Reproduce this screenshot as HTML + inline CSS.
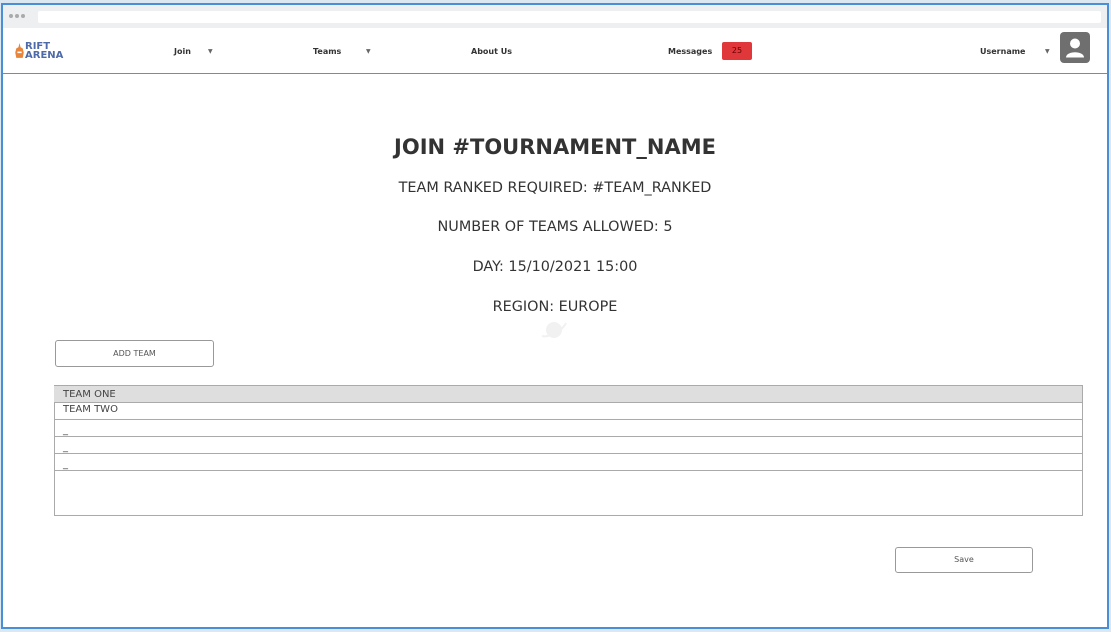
<!DOCTYPE html>
<html><head><meta charset="utf-8"><style>
*{box-sizing:border-box;margin:0;padding:0}
body{width:1111px;height:632px;background:#dbe7f1;position:relative;overflow:hidden;font-family:"DejaVu Sans","Liberation Sans",sans-serif;color:#333}
.frame{position:absolute;left:1px;top:3px;width:1108px;height:626px;border:2px solid #4a8fd6;background:#fff}
.abs{position:absolute}
.addr{left:0;top:0;width:1104px;height:23px;background:#eeeff1}
.url{left:35px;top:6px;width:1063px;height:12px;background:#fff;border-radius:2px}
.dot{width:4px;height:4px;border-radius:50%;background:#aaa;top:9px}
.nav{font-size:8px;font-weight:bold;color:#333}
.caret{font-size:6px;color:#666}
.c{text-align:center;width:1104px;left:0}
.btn{border:1px solid #999;border-radius:3px;font-size:8px;color:#555;text-align:center;background:#fff}
.row{left:51px;width:1028px;border-bottom:1px solid #aaa;font-size:10px;padding-left:9px;color:#444}
</style></head><body>
<div class="frame">
 <div class="abs addr"></div>
 <div class="abs dot" style="left:6px"></div><div class="abs dot" style="left:12px"></div><div class="abs dot" style="left:18px"></div>
 <div class="abs url"></div>
 <div class="abs" style="left:0;top:68px;width:1104px;height:1px;background:#888"></div>
 <svg class="abs" style="left:11px;top:38px" width="11" height="16" viewBox="0 0 10 15"><path d="M5 0 L6 4 L8 5 L9 9 L8 14 L2 14 L1 9 L2 5 L4 4Z" fill="#e8853a"/><rect x="3" y="8" width="4" height="1.5" fill="#fff"/></svg>
 <div class="abs" style="left:22px;top:37px;font-size:10px;font-weight:bold;color:#4f6aa8;line-height:9px">RIFT<br>ARENA</div>
 <div class="abs nav" style="left:171px;top:42px">Join</div><div class="abs caret" style="left:205px;top:43px">▼</div>
 <div class="abs nav" style="left:310px;top:42px">Teams</div><div class="abs caret" style="left:363px;top:43px">▼</div>
 <div class="abs nav" style="left:468px;top:42px">About Us</div>
 <div class="abs nav" style="left:665px;top:42px">Messages</div>
 <div class="abs" style="left:719px;top:37px;width:30px;height:18px;background:#e0373b;border-radius:2px;font-size:8px;color:#600;text-align:center;line-height:18px">25</div>
 <div class="abs nav" style="left:977px;top:42px">Username</div><div class="abs caret" style="left:1042px;top:43px">▼</div>
 <div class="abs" style="left:1057px;top:27px;width:30px;height:31px;background:#6f6f6f;border-radius:4px"><svg width="30" height="31" viewBox="0 0 30 30"><circle cx="15" cy="11" r="5" fill="#fff"/><path d="M6 25 C6 18 24 18 24 25Z" fill="#fff"/></svg></div>
 <div class="abs c" style="top:130px;font-size:21px;font-weight:bold;color:#333">JOIN #TOURNAMENT_NAME</div>
 <div class="abs c" style="top:175px;font-size:14.4px">TEAM RANKED REQUIRED: #TEAM_RANKED</div>
 <div class="abs c" style="top:214px;font-size:14.4px">NUMBER OF TEAMS ALLOWED: 5</div>
 <div class="abs c" style="top:254px;font-size:14.4px">DAY: 15/10/2021 15:00</div>
 <div class="abs c" style="top:294px;font-size:14.4px">REGION: EUROPE</div>
 <svg class="abs" style="left:536px;top:313px" width="30" height="25" viewBox="0 0 30 25"><circle cx="15" cy="12" r="8" fill="#f1f1f1"/><path d="M3 18 C10 20 24 12 27 5" stroke="#f1f1f1" stroke-width="2" fill="none"/></svg>
 <div class="abs btn" style="left:52px;top:335px;width:159px;height:27px;line-height:25px">ADD TEAM</div>
 <div class="abs" style="left:51px;top:380px;width:1029px;height:131px;border:1px solid #aaa"></div>
 <div class="row abs" style="top:380px;height:18px;background:#dedede;border-top:1px solid #aaa;line-height:17px">TEAM ONE</div>
 <div class="row abs" style="top:398px;height:17px;line-height:14px">TEAM TWO</div>
 <div class="row abs" style="top:415px;height:17px;line-height:22px">_</div>
 <div class="row abs" style="top:432px;height:17px;line-height:22px">_</div>
 <div class="row abs" style="top:449px;height:17px;line-height:22px">_</div>
 <div class="abs btn" style="left:892px;top:542px;width:138px;height:26px;line-height:24px">Save</div>
</div>
</body></html>
